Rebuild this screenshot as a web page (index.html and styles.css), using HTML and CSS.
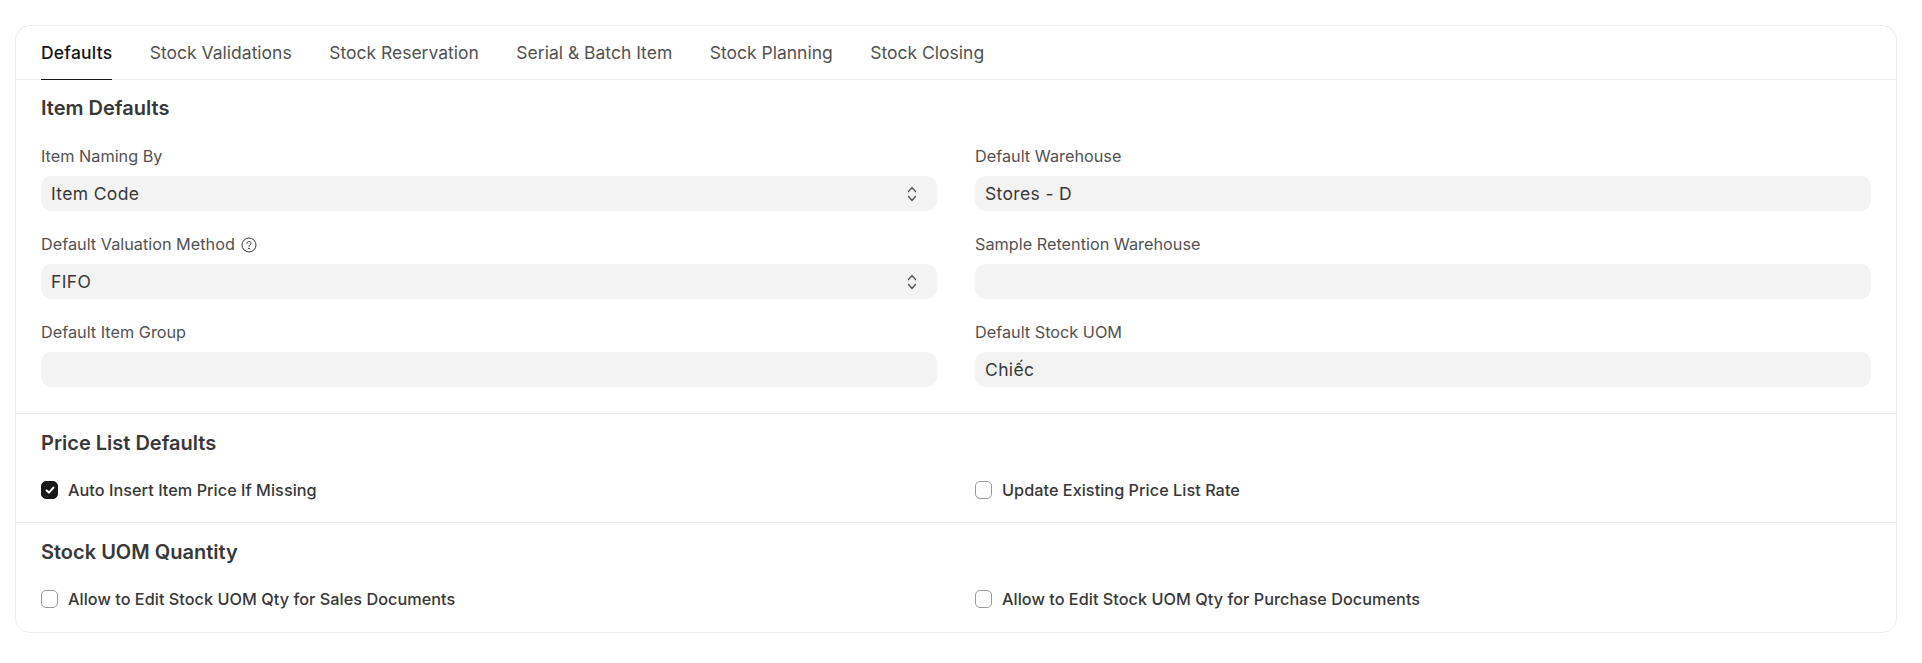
FILE: index.html
```html
<!DOCTYPE html>
<html lang="en">

<head>
    <meta charset="UTF-8">
    <title>Stock Settings</title>
    <link rel="stylesheet" href="styles.css">
</head>

<body>
    <div class="card">
        <!-- Tabs -->
        <div class="tabs">
            <div class="tab active">Defaults</div>
            <div class="tab">Stock Validations</div>
            <div class="tab">Stock Reservation</div>
            <div class="tab">Serial &amp; Batch Item</div>
            <div class="tab">Stock Planning</div>
            <div class="tab">Stock Closing</div>
        </div>

        <!-- Item Defaults -->
        <div class="section section-first">
            <h4 class="section-head">Item Defaults</h4>
            <div class="fields">
                <div class="field">
                    <div class="field-label">Item Naming By</div>
                    <div class="control">
                        <span>Item Code</span>
                        <svg class="updown" width="10" height="16" viewBox="0 0 10 16" fill="none" stroke="#525252" stroke-width="1.2" stroke-linecap="round" stroke-linejoin="round"><path d="M1.5 5.5 5 1.5 8.5 5.5"/><path d="M1.5 10.5 5 14.5 8.5 10.5"/></svg>
                    </div>
                </div>
                <div class="field">
                    <div class="field-label">Default Warehouse</div>
                    <div class="control"><span>Stores - D</span></div>
                </div>
                <div class="field">
                    <div class="field-label">Default Valuation Method
                        <svg class="help" width="16" height="16" viewBox="0 0 16 16" fill="none" stroke="#383838" stroke-width="1"><circle cx="8" cy="8" r="7"/><path d="M6 6.3C6 5.2 6.9 4.5 8 4.5s2 .7 2 1.8c0 1.4-2 1.5-2 3" stroke-linecap="round"/><circle cx="8" cy="11.4" r=".5" fill="#383838"/></svg>
                    </div>
                    <div class="control">
                        <span>FIFO</span>
                        <svg class="updown" width="10" height="16" viewBox="0 0 10 16" fill="none" stroke="#525252" stroke-width="1.2" stroke-linecap="round" stroke-linejoin="round"><path d="M1.5 5.5 5 1.5 8.5 5.5"/><path d="M1.5 10.5 5 14.5 8.5 10.5"/></svg>
                    </div>
                </div>
                <div class="field">
                    <div class="field-label">Sample Retention Warehouse</div>
                    <div class="control"></div>
                </div>
                <div class="field">
                    <div class="field-label">Default Item Group</div>
                    <div class="control"></div>
                </div>
                <div class="field">
                    <div class="field-label">Default Stock UOM</div>
                    <div class="control"><span>Chiếc</span></div>
                </div>
            </div>
        </div>

        <!-- Price List Defaults -->
        <div class="section">
            <h4 class="section-head">Price List Defaults</h4>
            <div class="checks">
                <label class="check">
                    <span class="box checked">
                        <svg width="12" height="12" viewBox="0 0 12 12" fill="none" stroke="#fff" stroke-width="2" stroke-linecap="round" stroke-linejoin="round"><path d="M2.6 6.4 5 8.6 9.4 3.6"/></svg>
                    </span>
                    Auto Insert Item Price If Missing
                </label>
                <label class="check"><span class="box"></span>Update Existing Price List Rate</label>
            </div>
        </div>

        <!-- Stock UOM Quantity -->
        <div class="section section-last">
            <h4 class="section-head">Stock UOM Quantity</h4>
            <div class="checks">
                <label class="check"><span class="box"></span>Allow to Edit Stock UOM Qty for Sales Documents</label>
                <label class="check"><span class="box"></span>Allow to Edit Stock UOM Qty for Purchase Documents</label>
            </div>
        </div>
    </div>
</body>

</html>
```

FILE: styles.css
```css
body {
    margin: 0;
    padding: 25px 25px 0 15px;
    background-color: #fff;
    color: #383838;
    font-family: Inter, "Noto Sans", sans-serif;
}

.card {
    border: 1px solid #ededed;
    border-radius: 15px;
    height: 608px;
    box-sizing: border-box;
}

.tabs {
    display: flex;
    gap: 37.5px;
    padding: 0 25px;
    height: 54px;
    box-sizing: border-box;
    border-bottom: 1px solid #ededed;
}

.tab {
    font-size: 17.5px;
    line-height: 53px;
    color: #525252;
}

.tab.active {
    color: #171717;
    font-weight: 500;
    letter-spacing: 0.012em;
    border-bottom: 1px solid #171717;
    height: 53px;
    margin-bottom: -1px;
}

.section {
    padding: 17px 25px 23px;
    border-top: 1px solid #ededed;
}

.section-first {
    padding-top: 16px;
    border-top: none;
    height: 333px;
    box-sizing: border-box;
}

.section-last {
    padding-bottom: 0;
}

.section-head {
    margin: 0;
    font-size: 20px;
    line-height: 24px;
    font-weight: 600;
    color: #383838;
}

.fields {
    display: grid;
    grid-template-columns: 1fr 1fr;
    column-gap: 38px;
    row-gap: 24px;
    margin-top: 27px;
}

.field-label {
    display: flex;
    align-items: center;
    gap: 6px;
    height: 19px;
    margin-bottom: 10px;
    font-size: 16.25px;
    line-height: 19px;
    color: #525252;
}

.control {
    display: flex;
    align-items: center;
    justify-content: space-between;
    height: 35px;
    padding: 0 10px;
    box-sizing: border-box;
    background-color: #f3f3f3;
    border-radius: 10px;
    font-size: 17.5px;
    letter-spacing: 0.02em;
    color: #383838;
}

.updown {
    margin-right: 10px;
}

.checks {
    display: grid;
    grid-template-columns: 1fr 1fr;
    column-gap: 38px;
    margin-top: 26px;
}

.check {
    display: flex;
    align-items: center;
    gap: 10px;
    height: 18px;
    font-size: 16.25px;
    font-weight: 500;
    letter-spacing: 0.002em;
    color: #383838;
}

.box {
    display: flex;
    align-items: center;
    justify-content: center;
    width: 17px;
    height: 18px;
    box-sizing: border-box;
    border: 1px solid #999;
    border-radius: 5px;
    background-color: #fff;
}

.box.checked {
    background-color: #171717;
    border-color: #171717;
}
```
